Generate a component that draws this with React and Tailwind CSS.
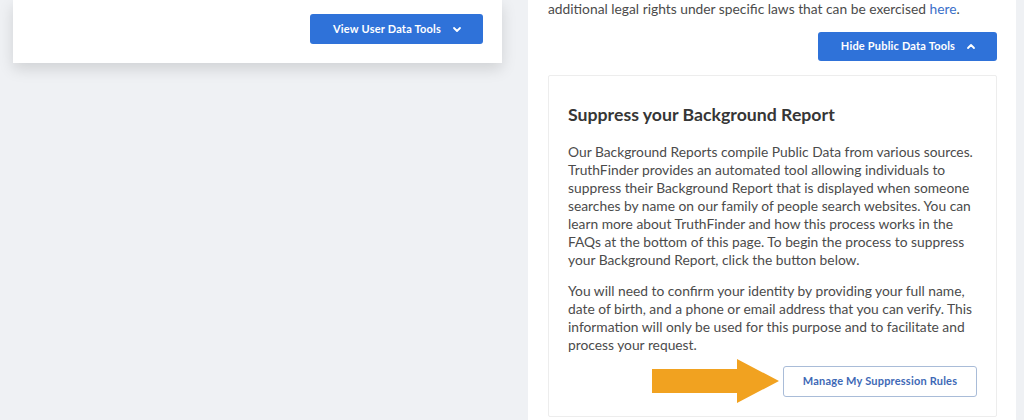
import React from "react";

function ChevronDown() {
  return (
    <svg width="10" height="7" viewBox="0 0 10 7" fill="none">
      <path d="M2 2L5 5L8 2" stroke="white" strokeWidth="1.8" strokeLinecap="round" strokeLinejoin="round" />
    </svg>
  );
}

function ChevronUp() {
  return (
    <svg width="10" height="7" viewBox="0 0 10 7" fill="none">
      <path d="M2 5L5 2L8 5" stroke="white" strokeWidth="1.8" strokeLinecap="round" strokeLinejoin="round" />
    </svg>
  );
}

export default function App() {
  return (
    <div className="w-[1024px] h-[420px] bg-[#eff1f4] overflow-hidden flex" style={{ fontFamily: "Lato, 'Liberation Sans', sans-serif" }}>
      <div className="w-[502px] pl-[13px] shrink-0">
        <div className="h-[63px] bg-white shadow-[0_6px_14px_rgba(0,0,0,0.13)] flex justify-end items-start pr-[19px] pt-[14px]">
          <button className="w-[173px] h-[30px] bg-[#2f72d9] rounded-[3px] text-white text-[11px] font-bold flex items-center justify-center gap-[11px] pl-[2px]">
            <span className="tracking-[0.2px]">View User Data Tools</span>
            <ChevronDown />
          </button>
        </div>
      </div>
      <div className="ml-[26px] w-[488px] h-full bg-white pl-[20px] pr-[19px] flex flex-col shrink-0">
        <p className="text-[13.8px] leading-[18px] text-[#4b4b4b]">
          additional legal rights under specific laws that can be exercised <span className="text-[#3b6fc9]">here</span>.
        </p>
        <div className="flex justify-end mt-[14px]">
          <button className="w-[179px] h-[29px] bg-[#2f72d9] rounded-[3px] text-white text-[11px] font-bold flex items-center justify-center gap-[11px] pl-[2px]">
            <span className="tracking-[0.2px]">Hide Public Data Tools</span>
            <ChevronUp />
          </button>
        </div>
        <div className="mt-[14px] border border-[#ededed] rounded-[2px] pt-[27px] pb-[19px] pl-[19px] pr-[19px] flex flex-col">
          <h2 className="text-[17.7px] leading-[24px] font-bold text-[#363636]">Suppress your Background Report</h2>
          <p className="mt-[16px] text-[13.8px] leading-[18px] text-[#4b4b4b] -mr-[6px]">
            Our Background Reports compile Public Data from various sources. TruthFinder provides an automated tool allowing individuals to suppress their Background Report that is displayed when someone searches by name on our family of people search websites. You can learn more about TruthFinder and how this process works in the FAQs at the bottom of this page. To begin the process to suppress your Background Report, click the button below.
          </p>
          <p className="mt-[13px] text-[13.8px] leading-[18px] text-[#4b4b4b] -mr-[6px]">
            You will need to confirm your identity by providing your full name, date of birth, and a phone or email address that you can verify. This information will only be used for this purpose and to facilitate and process your request.
          </p>
          <div className="mt-[12px] flex justify-end">
            <div className="relative">
              <svg className="absolute right-full mr-[3px] top-[-7px]" width="128" height="44" viewBox="0 0 128 44">
                <path d="M0 10 H85 V0 L127 22 L85 44 V34 H0 Z" fill="#f1a220" />
              </svg>
              <button className="w-[194px] h-[31px] border border-[#a9bcd8] rounded-[3px] bg-white text-[#3e69b6] text-[11px] font-bold tracking-[0.2px]">
                Manage My Suppression Rules
              </button>
            </div>
          </div>
        </div>
      </div>
    </div>
  );
}
